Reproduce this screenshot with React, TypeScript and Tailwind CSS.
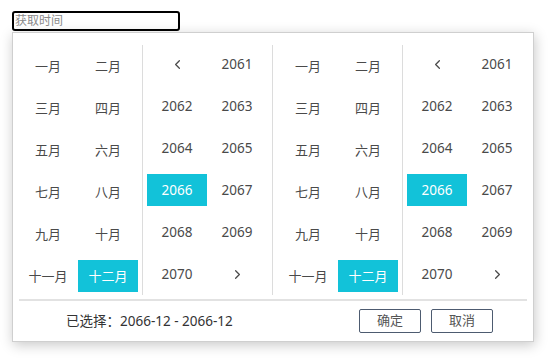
import { ChevronLeft, ChevronRight } from 'lucide-react';

const months = ['一月', '二月', '三月', '四月', '五月', '六月', '七月', '八月', '九月', '十月', '十一月', '十二月'];
const years = ['<', '2061', '2062', '2063', '2064', '2065', '2066', '2067', '2068', '2069', '2070', '>'];

const font = { fontFamily: '"Noto Sans", "Noto Sans CJK SC", sans-serif' };

function MonthPanel() {
  return (
    <div className="w-[130px] h-[250px] border-r border-[#dcdcdc] pt-[5px] pl-[5px]">
      <div className="grid grid-cols-[60px_60px] gap-y-[10px]">
        {months.map((m) => (
          <div
            key={m}
            className={`h-[32px] flex items-center justify-center pt-[1px] text-[13px] ${m === '十二月' ? 'bg-[#12c2d9] text-white' : 'text-[#4a4a4a]'}`}
          >
            {m}
          </div>
        ))}
      </div>
    </div>
  );
}

function YearPanel({ last }: { last?: boolean }) {
  return (
    <div className={`w-[130px] h-[250px] pt-[3px] pl-[4px] ${last ? '' : 'border-r border-[#dcdcdc]'}`}>
      <div className="grid grid-cols-[60px_60px] gap-y-[10px]">
        {years.map((y) => (
          <div
            key={y}
            className={`h-[32px] flex items-center justify-center pt-[1px] text-[13.5px] ${y === '2066' ? 'bg-[#12c2d9] text-white' : 'text-[#4a4a4a]'}`}
          >
            {y === '<' ? (
              <ChevronLeft size={15} strokeWidth={2} className="text-[#4a4a4a]" />
            ) : y === '>' ? (
              <ChevronRight size={15} strokeWidth={2} className="text-[#4a4a4a]" />
            ) : (
              y
            )}
          </div>
        ))}
      </div>
    </div>
  );
}

export default function App() {
  return (
    <div className="w-[548px] h-[362px] bg-white pt-[11px] pl-[12px]" style={font}>
      <div className="w-[168px] h-[20px] border-2 border-black rounded-[3px] flex items-center pl-[1px] text-[12px] text-[#8a8a8a] leading-none">
        获取时间
      </div>
      <div className="mt-[1px] w-[522px] h-[310px] border border-[#cfcfcf] bg-white shadow-[1px_3px_12px_rgba(0,0,0,0.22)]">
        <div className="flex pt-[12px]">
          <MonthPanel />
          <YearPanel />
          <MonthPanel />
          <YearPanel last />
        </div>
        <div className="mx-[6px] mt-[4px] h-[2px] bg-[#e2e2e2]" />
        <div className="flex items-center justify-between pt-[8px] pl-[53px] pr-[40px]">
          <span className="text-[13.5px] text-[#333]">已选择：2066-12 - 2066-12</span>
          <div className="flex gap-[10px]">
            <button className="w-[62px] h-[24px] border border-[#4d5b70] rounded-[2px] text-[13px] text-[#555] flex items-center justify-center">
              确定
            </button>
            <button className="w-[62px] h-[24px] border border-[#4d5b70] rounded-[2px] text-[13px] text-[#555] flex items-center justify-center">
              取消
            </button>
          </div>
        </div>
      </div>
    </div>
  );
}
